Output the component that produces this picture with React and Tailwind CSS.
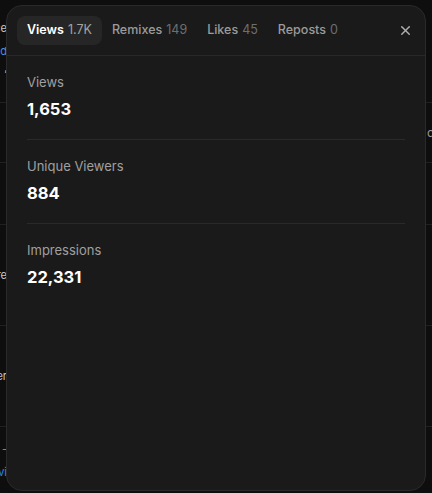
import React from 'react';
import { X } from 'lucide-react';

const tabs = [
  { label: 'Views', count: '1.7K', active: true },
  { label: 'Remixes', count: '149' },
  { label: 'Likes', count: '45' },
  { label: 'Reposts', count: '0' },
];

const stats = [
  { label: 'Views', value: '1,653' },
  { label: 'Unique Viewers', value: '884' },
  { label: 'Impressions', value: '22,331' },
];

// rows of the page that sits behind the dialog
const bgRows = [
  { h: 'h-[103px]', left: [['ce', 'text-[#c8c8c8]'], ['d', 'text-[#4a8fe0]'], ['’', 'text-[#c8c8c8]']], right: null },
  { h: 'h-[60px]', left: [], right: 'c' },
  { h: 'h-[62px]', left: [], right: null },
  { h: 'h-[101px]', left: [['re', 'text-[#c8c8c8]']], right: null },
  { h: 'h-[101px]', left: [['er', 'text-[#c8c8c8]']], right: null },
  { h: 'flex-1', left: [['-', 'text-[#8a8a8a]'], ['vi', 'text-[#2f86d8]']], right: null, last: true },
];

const App = () => {
  return (
    <div
      className="relative w-[432px] h-[493px] overflow-hidden bg-[#0e0e0e]"
      style={{ fontFamily: 'Inter, "Noto Sans", sans-serif' }}
    >
      <div className="flex flex-col h-full">
        {bgRows.map((row, i) => (
          <div key={i} className={`${row.h} flex ${row.last ? '' : 'border-b border-[#202020]'}`}>
            <div className="w-[7px] overflow-hidden flex flex-col justify-center gap-[7px]">
              {row.left.map(([t, c], j) => (
                <div key={j} className={`flex justify-end whitespace-nowrap text-[11px] leading-[16px] ${c}`}>
                  <span>{t}</span>
                </div>
              ))}
            </div>
            <div className="flex-1" />
            <div className="w-[6px] overflow-hidden flex items-center">
              {row.right && <span className="text-[12px] text-[#9a9a9a] whitespace-nowrap pl-[1px]">{row.right}</span>}
            </div>
          </div>
        ))}
      </div>

      <div className="absolute left-[6px] top-[5px] w-[420px] h-[486px] rounded-[16px] border border-[#2a2a2a] bg-[#1a1a1a] flex flex-col">
        <div className="h-[50px] shrink-0 flex items-center pl-[10px] pr-[8px] border-b border-[#282828]">
          <div className="flex items-center">
            {tabs.map((t) => (
              <button
                key={t.label}
                className={`h-[29px] px-[10px] rounded-[8px] flex items-center gap-[4px] text-[12.5px] ${
                  t.active ? 'bg-[#262626]' : ''
                }`}
              >
                <span className={t.active ? 'font-semibold text-white' : 'font-medium text-[#9b9b9b]'}>{t.label}</span>
                <span className={t.active ? 'text-[#a3a3a3]' : 'text-[#6e6e6e]'}>{t.count}</span>
              </button>
            ))}
          </div>
          <button className="ml-auto w-6 h-6 flex items-center justify-center text-[#b0b0b0]">
            <X size={15} strokeWidth={2.2} />
          </button>
        </div>

        <div className="px-[20px] flex flex-col">
          {stats.map((s, i) => (
            <div
              key={s.label}
              className={`pt-4 pb-[18px] flex flex-col ${i < stats.length - 1 ? 'border-b border-[#2a2a2a]' : ''}`}
            >
              <p className="text-[13px] leading-5 text-[#a0a0a0]">{s.label}</p>
              <p className="mt-[5px] text-[16.5px] leading-6 font-bold text-white">{s.value}</p>
            </div>
          ))}
        </div>
      </div>
    </div>
  );
};

export default App;
